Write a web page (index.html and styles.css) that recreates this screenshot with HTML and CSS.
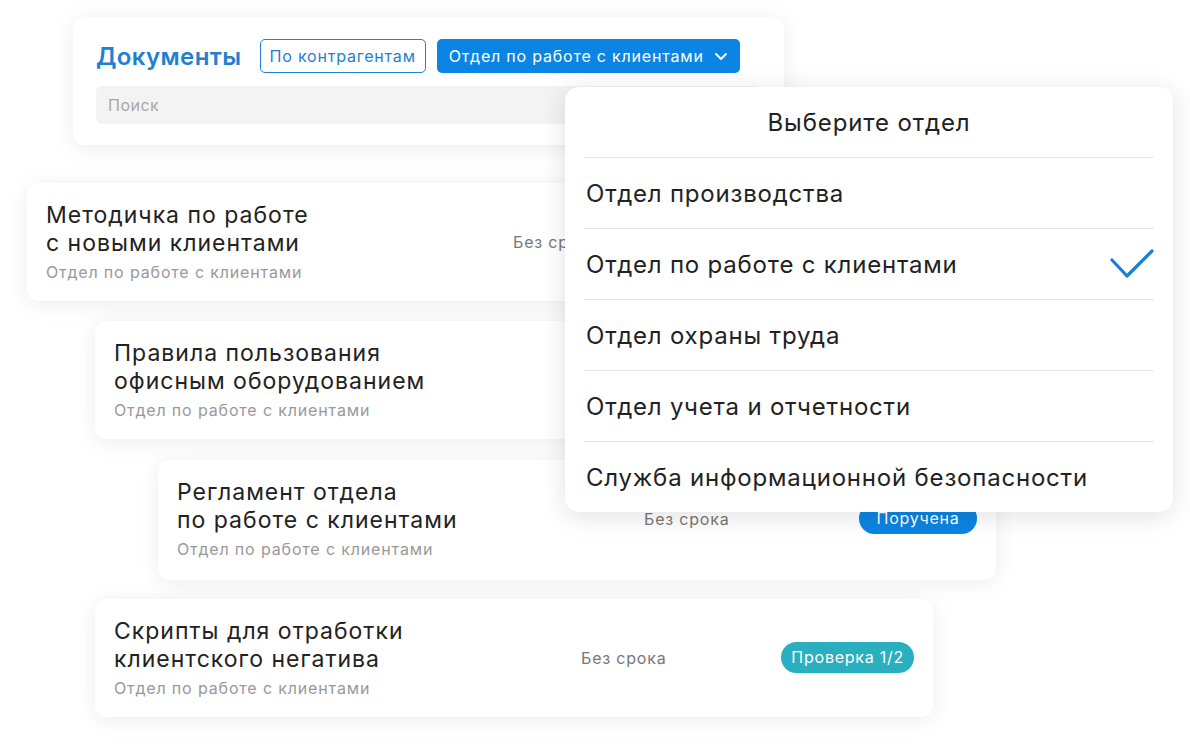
FILE: index.html
```html
<!DOCTYPE html>
<html lang="ru">
<head>
    <meta charset="UTF-8">
    <meta name="viewport" content="width=device-width, initial-scale=1.0">
    <title>Документы</title>
    <link rel="stylesheet" href="styles.css">
</head>
<body>
    <div class="stage">
        <div class="docs-header">
            <div class="header-row">
                <h1>Документы</h1>
                <button class="btn-outline">По контрагентам</button>
                <button class="btn-filled">Отдел по работе с клиентами
                    <svg class="chevron" width="14" height="9" viewBox="0 0 14 9"><polyline points="2,2 7,7 12,2" fill="none" stroke="#fff" stroke-width="2" stroke-linecap="round" stroke-linejoin="round"/></svg>
                </button>
            </div>
            <div class="search">Поиск</div>
        </div>

        <div class="doc-card card-1">
            <div class="doc-info">
                <div class="doc-title">Методичка по работе<br>с новыми клиентами</div>
                <div class="doc-dept">Отдел по работе с клиентами</div>
            </div>
            <div class="doc-date">Без срока</div>
        </div>

        <div class="doc-card card-2">
            <div class="doc-info">
                <div class="doc-title">Правила пользования<br>офисным оборудованием</div>
                <div class="doc-dept">Отдел по работе с клиентами</div>
            </div>
            <div class="doc-date">Без срока</div>
        </div>

        <div class="doc-card card-3">
            <div class="doc-info">
                <div class="doc-title">Регламент отдела<br>по работе с клиентами</div>
                <div class="doc-dept">Отдел по работе с клиентами</div>
            </div>
            <div class="doc-date">Без срока</div>
            <span class="badge badge-blue">Поручена</span>
        </div>

        <div class="doc-card card-4">
            <div class="doc-info">
                <div class="doc-title">Скрипты для отработки<br>клиентского негатива</div>
                <div class="doc-dept">Отдел по работе с клиентами</div>
            </div>
            <div class="doc-date">Без срока</div>
            <span class="badge badge-teal">Проверка 1/2</span>
        </div>

        <div class="dept-menu">
            <div class="menu-title">Выберите отдел</div>
            <div class="menu-item">Отдел производства</div>
            <div class="menu-item">Отдел по работе с клиентами
                <svg class="check" width="46" height="32" viewBox="0 0 46 32"><polyline points="3,12 18,28 43,3" fill="none" stroke="#1b7fd4" stroke-width="3.2" stroke-linecap="round" stroke-linejoin="round"/></svg>
            </div>
            <div class="menu-item">Отдел охраны труда</div>
            <div class="menu-item">Отдел учета и отчетности</div>
            <div class="menu-item">Служба информационной безопасности</div>
        </div>
    </div>
</body>
</html>
```

FILE: styles.css
```css
body {
    margin: 0;
    background: #fff;
    font-family: Inter, "Noto Sans", sans-serif;
    color: #222;
}
.stage {
    position: relative;
    width: 1190px;
    height: 744px;
    padding-top: 17px;
    box-sizing: border-box;
}
.docs-header {
    margin-left: 73px;
    width: 711px;
    box-sizing: border-box;
    padding: 22px 23px 21px;
    background: #fff;
    border-radius: 12px;
    box-shadow: 0 3px 22px rgba(0, 0, 0, 0.08);
}
.header-row {
    display: flex;
    align-items: center;
}
h1 {
    margin: 0 18px 0 0;
    font-size: 24px;
    font-weight: 600;
    letter-spacing: 0.4px;
    color: #1f80d2;
}
.btn-outline,
.btn-filled {
    height: 34px;
    padding: 0 9px;
    font-family: inherit;
    font-size: 16px;
    letter-spacing: 0.8px;
    border-radius: 5px;
    display: flex;
    align-items: center;
}
.btn-outline {
    border: 1.5px solid #1f80d2;
    background: #fff;
    color: #1f80d2;
    margin-right: 11px;
}
.btn-filled {
    border: none;
    padding: 0 12px;
    background: #0b84e3;
    color: #fff;
    gap: 10px;
}
.search {
    margin-top: 13px;
    height: 38px;
    line-height: 38px;
    padding-left: 12px;
    background: #f3f3f3;
    border-radius: 6px;
    color: #a8a8a8;
    font-size: 16px;
    letter-spacing: 0.5px;
}
.doc-card {
    width: 838px;
    box-sizing: border-box;
    padding: 18px 19px 19px;
    background: #fff;
    border-radius: 12px;
    box-shadow: 0 3px 22px rgba(0, 0, 0, 0.08);
    display: flex;
    align-items: center;
}
.card-1 { margin: 38px 0 0 27px; }
.card-2 { margin: 20px 0 0 95px; }
.card-3 { margin: 21px 0 0 158px; padding-bottom: 21px; }
.card-4 { margin: 19px 0 0 95px; }
.doc-info {
    width: 467px;
}
.doc-title {
    font-size: 23px;
    line-height: 28px;
    letter-spacing: 1px;
    color: #222;
}
.doc-dept {
    margin-top: 5px;
    font-size: 16px;
    line-height: 20px;
    letter-spacing: 0.85px;
    color: #999;
}
.doc-date {
    font-size: 16px;
    letter-spacing: 0.8px;
    color: #777;
}
.badge {
    margin-left: auto;
    height: 31px;
    line-height: 31px;
    padding: 0 10px;
    border-radius: 16px;
    color: #fff;
    font-size: 16px;
    letter-spacing: 0.75px;
}
.badge-blue {
    background: #0b84e3;
    width: 98px;
    text-align: center;
}
.badge-teal {
    background: #2aafbf;
}
.dept-menu {
    position: absolute;
    left: 565px;
    top: 87px;
    width: 608px;
    height: 425px;
    box-sizing: border-box;
    padding: 0 19px;
    background: #fff;
    border-radius: 14px;
    box-shadow: 0 4px 26px rgba(0, 0, 0, 0.12);
}
.menu-title {
    height: 70px;
    line-height: 72px;
    text-align: center;
    font-size: 24px;
    letter-spacing: 0.9px;
    border-bottom: 1.5px solid #e4e4e4;
}
.menu-item {
    height: 70px;
    padding-left: 2px;
    display: flex;
    align-items: center;
    justify-content: space-between;
    font-size: 24px;
    letter-spacing: 0.8px;
    border-bottom: 1.5px solid #e4e4e4;
}
.menu-item:last-child {
    border-bottom: none;
}
.check {
    margin-right: -1px;
}
```
